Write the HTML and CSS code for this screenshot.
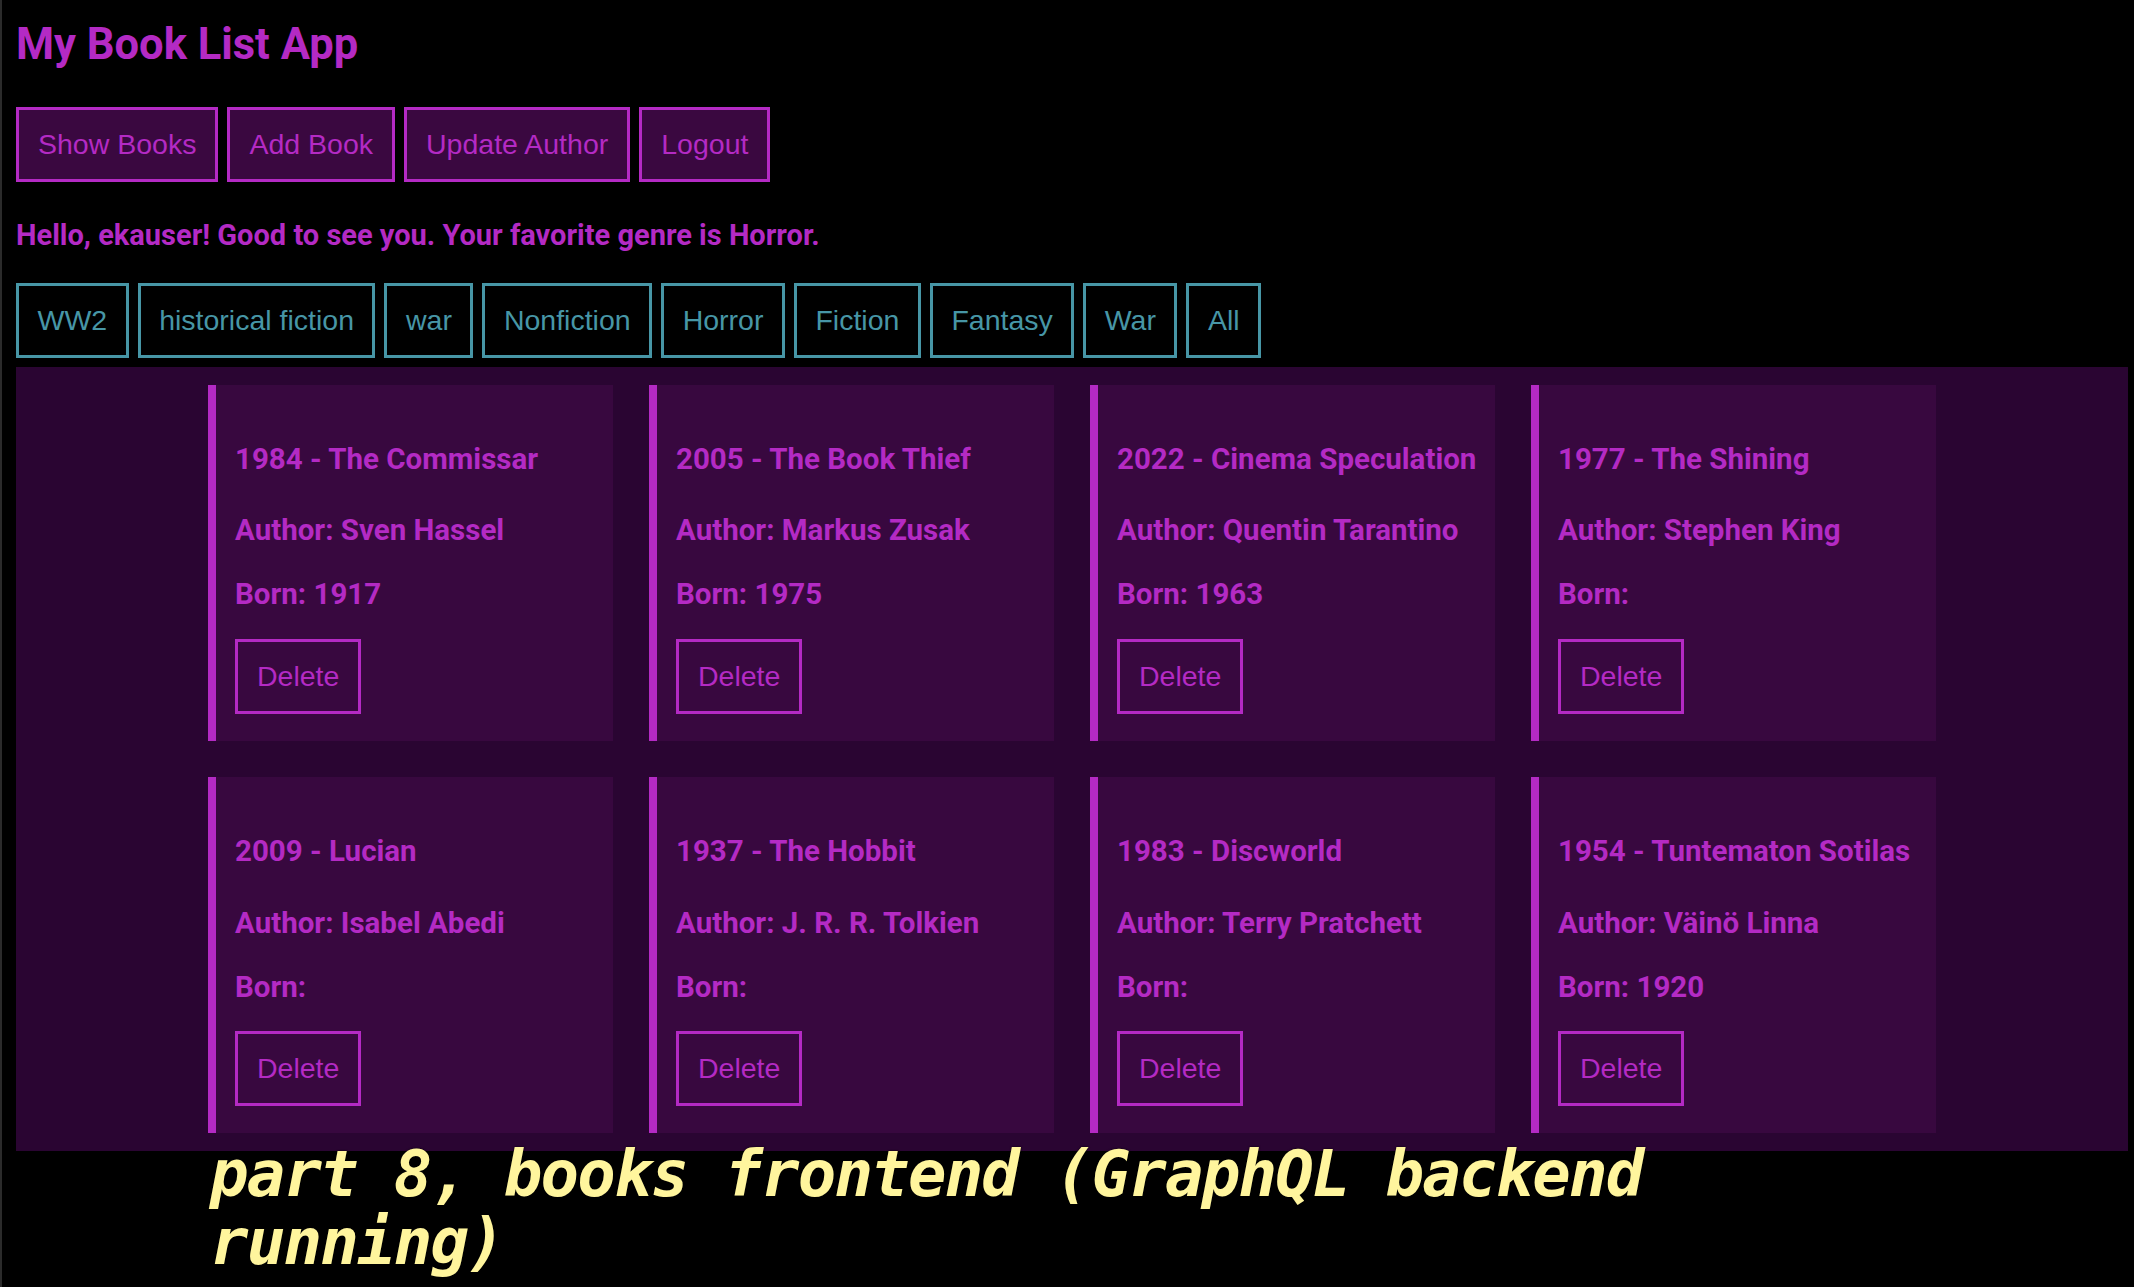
FILE: index.html
```html
<!DOCTYPE html>
<html lang="en">
<head>
<meta charset="utf-8">
<title>My Book List App</title>
<link rel="stylesheet" href="styles.css">
</head>
<body>
  <h1 class="app-title">My Book List App</h1>
  <nav class="nav">
    <button class="nav-btn">Show Books</button>
    <button class="nav-btn">Add Book</button>
    <button class="nav-btn">Update Author</button>
    <button class="nav-btn">Logout</button>
  </nav>
  <p class="greeting">Hello, ekauser! Good to see you. Your favorite genre is Horror.</p>
  <div class="genres">
    <button class="genre-btn">WW2</button>
    <button class="genre-btn">historical fiction</button>
    <button class="genre-btn">war</button>
    <button class="genre-btn">Nonfiction</button>
    <button class="genre-btn">Horror</button>
    <button class="genre-btn">Fiction</button>
    <button class="genre-btn">Fantasy</button>
    <button class="genre-btn">War</button>
    <button class="genre-btn">All</button>
  </div>
  <section class="books">
    <article class="card">
      <h3 class="card-title">1984 - The Commissar</h3>
      <p class="card-author">Author: Sven Hassel</p>
      <p class="card-born">Born: 1917</p>
      <button class="delete-btn">Delete</button>
    </article>
    <article class="card">
      <h3 class="card-title">2005 - The Book Thief</h3>
      <p class="card-author">Author: Markus Zusak</p>
      <p class="card-born">Born: 1975</p>
      <button class="delete-btn">Delete</button>
    </article>
    <article class="card">
      <h3 class="card-title">2022 - Cinema Speculation</h3>
      <p class="card-author">Author: Quentin Tarantino</p>
      <p class="card-born">Born: 1963</p>
      <button class="delete-btn">Delete</button>
    </article>
    <article class="card">
      <h3 class="card-title">1977 - The Shining</h3>
      <p class="card-author">Author: Stephen King</p>
      <p class="card-born">Born: </p>
      <button class="delete-btn">Delete</button>
    </article>
    <article class="card">
      <h3 class="card-title">2009 - Lucian</h3>
      <p class="card-author">Author: Isabel Abedi</p>
      <p class="card-born">Born: </p>
      <button class="delete-btn">Delete</button>
    </article>
    <article class="card">
      <h3 class="card-title">1937 - The Hobbit</h3>
      <p class="card-author">Author: J. R. R. Tolkien</p>
      <p class="card-born">Born: </p>
      <button class="delete-btn">Delete</button>
    </article>
    <article class="card">
      <h3 class="card-title">1983 - Discworld</h3>
      <p class="card-author">Author: Terry Pratchett</p>
      <p class="card-born">Born: </p>
      <button class="delete-btn">Delete</button>
    </article>
    <article class="card">
      <h3 class="card-title">1954 - Tuntematon Sotilas</h3>
      <p class="card-author">Author: Väinö Linna</p>
      <p class="card-born">Born: 1920</p>
      <button class="delete-btn">Delete</button>
    </article>
  </section>
  <p class="caption">part 8, books frontend (GraphQL backend running)</p>
</body>
</html>
```

FILE: styles.css
```css
html {
  background: #000;
}

body {
  margin: 0;
  min-height: 1287px;
  box-sizing: border-box;
  padding: 0 6px 0 14px;
  border-left: 2px solid #2b2b2b;
  background: #000;
  color: #b42ac4;
  font-family: Roboto, "Liberation Sans", sans-serif;
  overflow: hidden;
}

.app-title {
  margin: 19px 0 0;
  font-size: 43.5px;
  font-weight: 700;
  line-height: 52px;
}

.nav {
  display: flex;
  gap: 9px;
  margin-top: 36px;
}

.nav-btn,
.genre-btn,
.delete-btn {
  font-family: "Liberation Sans", Arial, sans-serif;
  font-size: 28.5px;
  line-height: 33px;
  padding: 18px 19px;
  border: 3px solid #b42ac4;
  color: #b42ac4;
  background: transparent;
  border-radius: 0;
  cursor: pointer;
}

.nav-btn {
  background: #3a0840;
}

.greeting {
  margin: 36px 0 0;
  font-size: 29px;
  font-weight: 700;
  line-height: 34px;
}

.genres {
  display: flex;
  gap: 9px;
  margin-top: 31px;
}

.genre-btn {
  padding: 18px 18.5px;
  border-color: #4796a6;
  color: #4796a6;
  background: #000;
}

.books {
  display: flex;
  flex-wrap: wrap;
  justify-content: center;
  margin-top: 9px;
  background: #2a0532;
}

.card {
  box-sizing: border-box;
  width: 405px;
  margin: 18px;
  padding: 27px 18px 27px 19px;
  border-left: 8px solid #b42ac4;
  background: #38083f;
}

.card-title,
.card-author,
.card-born {
  font-size: 29.5px;
  font-weight: 700;
  line-height: 34.6px;
}

.card-title {
  margin: 29.5px 0 0;
}

.card-author {
  margin: 37.4px 0 0;
}

.card-born {
  margin: 29.4px 0 0;
}

.delete-btn {
  display: block;
  margin-top: 27px;
}

.caption {
  position: relative;
  margin: -11px 0 0 194px;
  max-width: 1500px;
  font-family: "DejaVu Sans Mono", "Liberation Mono", monospace;
  font-style: italic;
  font-weight: 700;
  font-size: 64px;
  letter-spacing: -1.8px;
  line-height: 68px;
  color: #fff59d;
  text-shadow: 0 0 2px #000;
}
```
